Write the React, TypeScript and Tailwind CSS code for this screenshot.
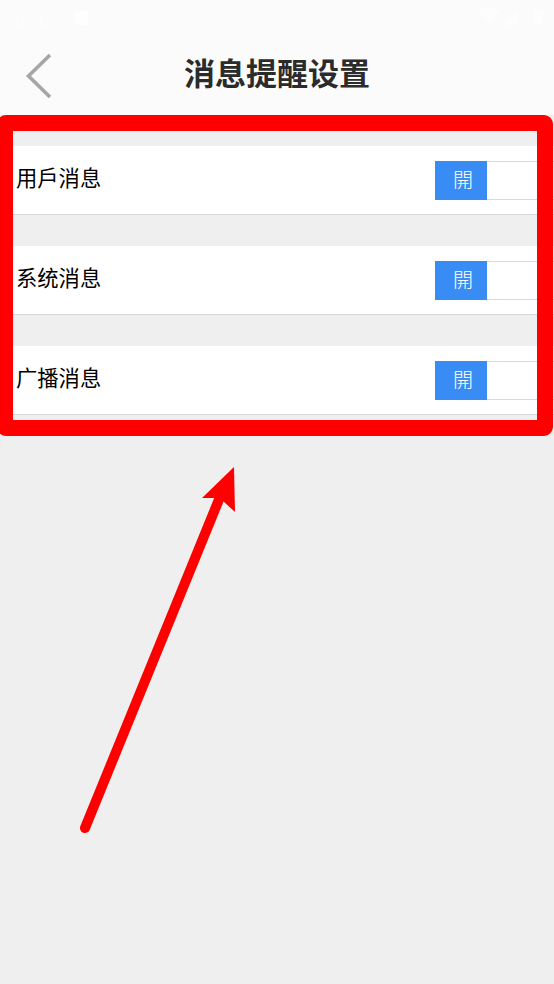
const font = { fontFamily: '"Noto Sans CJK SC", "Noto Sans", sans-serif' };

const rows = ["用戶消息", "系统消息", "广播消息"];

function StatusBar() {
  return (
    <div className="flex h-[36px] items-center justify-between pl-[11px] pr-[10px] text-white">
      <div className="flex items-center gap-[21px]">
        <span className="text-[17px] leading-none opacity-70">12:42</span>
        <span className="h-[14px] w-[14px] rounded-[3px] bg-white opacity-70" />
      </div>
      <svg width="66" height="20" viewBox="0 0 66 20" fill="white" opacity="0.7">
        <path d="M0 3 Q11 -3 22 3 L11 17 Z" />
        <path d="M40 2 V17 H26 Z" />
        <rect x="56" y="2" width="9" height="15" rx="1" />
      </svg>
    </div>
  );
}

function Toggle() {
  return (
    <div className="flex h-[39px] w-[119px] border-y border-[#d9d9d9]">
      <div className="-my-px flex h-[39px] w-[52px] items-center justify-center bg-[#3a8cf5] pl-[4px] text-[20px] font-light text-white">
        開
      </div>
    </div>
  );
}

export default function App() {
  return (
    <div className="relative h-[984px] w-[554px] overflow-hidden bg-[#efefef]" style={font}>
      <header className="h-[115px] bg-[#fbfbfb]">
        <StatusBar />
        <div className="relative flex h-[79px] items-center justify-center pb-[8px]">
          <svg className="absolute left-[24px] top-[16px]" width="30" height="46" viewBox="0 0 30 46" fill="none">
            <path d="M26 3 L4.5 24 L26 45" stroke="#a6a6a6" strokeWidth="3.6" />
          </svg>
          <h1 className="text-[31px] font-bold leading-none text-[#2b2b2b]">消息提醒设置</h1>
        </div>
      </header>

      <div className="flex flex-col gap-[31px] pt-[31px]">
        {rows.map((label) => (
          <div
            key={label}
            className="flex h-[69px] items-center justify-between border-b border-[#d6d6d6] bg-white pl-[16px]"
          >
            <span className="pb-[6px] text-[21.3px] font-normal leading-none text-black">{label}</span>
            <Toggle />
          </div>
        ))}
      </div>

      {/* annotation drawn on top of the screenshot */}
      <div className="absolute left-[-3px] top-[115px] h-[321px] w-[556px] rounded-[9px] border-[16px] border-[#ff0000]" />
      <svg className="absolute left-0 top-0" width="554" height="984" viewBox="0 0 554 984">
        <line x1="85" y1="828" x2="220" y2="497" stroke="#ff0000" strokeWidth="10" strokeLinecap="round" />
        <path d="M234 467 L235 512 L223 501 L214 498 L202 498 Z" fill="#ff0000" />
      </svg>
    </div>
  );
}
